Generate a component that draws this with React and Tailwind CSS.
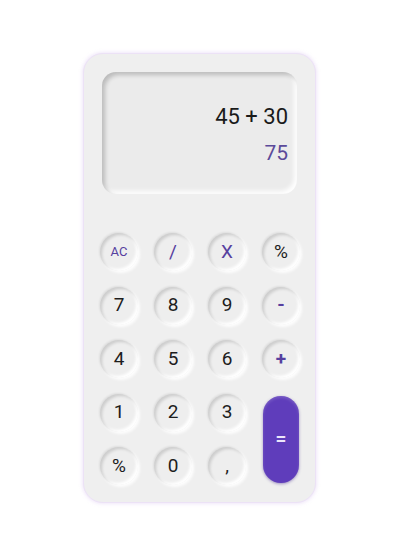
import React from "react";

const keys = [
  { label: "AC", kind: "op", small: true },
  { label: "/", kind: "op" },
  { label: "X", kind: "op" },
  { label: "%", kind: "num" },
  { label: "7", kind: "num" },
  { label: "8", kind: "num" },
  { label: "9", kind: "num" },
  { label: "-", kind: "op", bold: true },
  { label: "4", kind: "num" },
  { label: "5", kind: "num" },
  { label: "6", kind: "num" },
  { label: "+", kind: "op", bold: true },
  { label: "1", kind: "num" },
  { label: "2", kind: "num" },
  { label: "3", kind: "num" },
  { label: "=", kind: "eq" },
  { label: "%", kind: "num" },
  { label: "0", kind: "num" },
  { label: ",", kind: "num" },
];

function Key({ k }) {
  if (k.kind === "eq") {
    return (
      <div className="row-span-2 flex justify-center py-[2px]">
        <button
          type="button"
          className="w-[36px] h-full rounded-full bg-[#5f3dbb] text-[#ece6fb] text-[19px] font-bold flex items-center justify-center shadow-[0_1px_3px_rgba(60,30,140,0.45),inset_0_2px_3px_rgba(255,255,255,0.15)]"
        >
          =
        </button>
      </div>
    );
  }
  return (
    <button
      type="button"
      className={`w-[38px] h-[38px] rounded-full bg-[#eeeeee] flex items-center justify-center shadow-[inset_2px_2px_3px_rgba(0,0,0,0.14),inset_-2px_-2px_3px_rgba(255,255,255,1),2px_2px_3px_rgba(255,255,255,0.9),-1px_-1px_2px_rgba(0,0,0,0.07)] ${
        k.kind === "op" ? "text-[#56409f]" : "text-[#1d1d1d]"
      } ${k.bold ? "font-bold" : "font-normal"} ${k.small ? "text-[13px]" : "text-[19px]"}`}
    >
      {k.label}
    </button>
  );
}

export default function App() {
  return (
    <div
      className="w-[416px] h-[539px] bg-white flex items-start"
      style={{ fontFamily: "Roboto, 'Liberation Sans', Arial, sans-serif" }}
    >
      <div className="ml-[83px] mt-[53px] w-[233px] h-[450px] rounded-[20px] bg-[#efefef] border border-[#ece2f6] shadow-[0_0_4px_rgba(190,150,230,0.35)] flex flex-col pt-[18px] px-4">
        <div className="mx-[2px] h-[122px] rounded-[14px] bg-[#ebebeb] shadow-[inset_3px_3px_4px_rgba(0,0,0,0.2),inset_-3px_-3px_4px_rgba(255,255,255,0.95)] flex flex-col items-end pr-[9px] pt-[33px]">
          <div className="text-[22px] text-[#1a1a1a] leading-[24px]">45 + 30</div>
          <div className="text-[21px] text-[#5b4a9a] leading-[24px] mt-[12px]">75</div>
        </div>
        <div className="mt-[39px] grid grid-cols-[repeat(4,38px)] auto-rows-[38px] gap-x-[16px] gap-y-[15.5px]">
          {keys.map((k, i) => (
            <Key key={i} k={k} />
          ))}
        </div>
      </div>
    </div>
  );
}
